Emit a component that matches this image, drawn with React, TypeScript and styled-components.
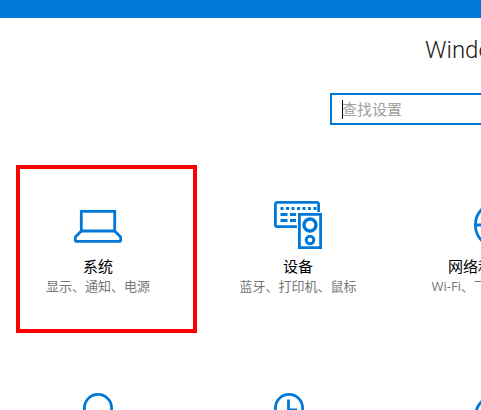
import { createGlobalStyle, styled } from 'styled-components'

const GlobalStyle = createGlobalStyle`
  html, body {
    margin: 0;
    padding: 0;
    background: #fff;
    overflow: hidden;
  }
`

const Page = styled.div`
  width: 481px;
  height: 410px;
  overflow: hidden;
  font-family: 'Noto Sans CJK SC', 'Noto Sans', sans-serif;
`

const TopBar = styled.div`
  height: 18px;
  background: #0078d7;
`

const Header = styled.header`
  display: flex;
  flex-direction: column;
  align-items: flex-start;
  padding: 17px 0 0 330px;
  height: 147px;
  box-sizing: border-box;
`

const Title = styled.h1`
  margin: 0 0 0 95px;
  height: 30px;
  font-family: Roboto, 'Noto Sans CJK SC', sans-serif;
  font-size: 24px;
  font-weight: 300;
  line-height: 30px;
  color: #222;
  white-space: nowrap;
`

const SearchBox = styled.div`
  margin-top: 28px;
  flex: none;
  width: 300px;
  height: 32px;
  box-sizing: border-box;
  border: 2px solid #0078d7;
  padding: 0 0 2px 10px;
  display: flex;
  align-items: center;
  position: relative;
  font-size: 15px;
  color: #a0a0a0;
`

const Caret = styled.span`
  position: absolute;
  left: 10px;
  top: 5px;
  width: 1px;
  height: 19px;
  background: #000;
`

const Grid = styled.div`
  display: grid;
  grid-template-columns: repeat(3, 200px);
  grid-auto-rows: 192px;
  margin-left: -2px;
`

const Tile = styled.div`
  position: relative;
  display: flex;
  flex-direction: column;
  align-items: center;
  padding-top: 36px;
  white-space: nowrap;
`

const IconSvg = styled.svg.attrs({ viewBox: '0 0 48 48', fill: 'none', stroke: 'currentColor' })`
  display: block;
  flex: none;
  width: 48px;
  height: 48px;
  color: #0078d7;
  stroke-width: 2.8px;
`

const TileName = styled.div`
  margin-top: 8px;
  font-family: Roboto, 'Noto Sans CJK SC', sans-serif;
  font-size: 15px;
  line-height: 20px;
  color: #000;
`

const TileDesc = styled.div`
  font-family: 'Open Sans', 'Noto Sans CJK SC', sans-serif;
  font-size: 13px;
  line-height: 18px;
  color: #767676;
`

const RedFrame = styled.div`
  position: absolute;
  left: 18px;
  top: 0;
  width: 181px;
  height: 168px;
  box-sizing: border-box;
  border: 4px solid #f00;
`

const LaptopIcon = () => (
  <IconSvg>
    <path d="M7.300 10.300h33.400V30H7.300z" />
    <path d="M7.300 30L1.800 35.500q-.5.500-.5 1.500v2q0 1.400 1.400 1.400h42.600q1.400 0 1.400-1.400v-2q0-1-.5-1.500L40.700 30" />
  </IconSvg>
)

const DevicesIcon = () => (
  <IconSvg>
    <path d="M23 25.600H3a1.600 1.600 0 0 1-1.600-1.600V3A1.600 1.600 0 0 1 3 1.400h40A1.600 1.600 0 0 1 44.600 3v8" />
    <path d="M25.400 13.400h21.200v33.200H25.400z" />
    <circle cx="36" cy="24" r="6" strokeWidth="3.400" />
    <circle cx="36" cy="39" r="3.800" strokeWidth="3" />
    <path d="M6.500 7.500h3M12 7.500h3M17.500 7.500h3M23 7.500h3M28.500 7.500h3M34 7.500h3M39.500 7.500h3M6.500 13.500h7M16 13.500h6M6.500 19.500h7M16 19.500h6" />
  </IconSvg>
)

const GlobeIcon = () => (
  <IconSvg>
    <circle cx="24" cy="24" r="22.600" />
    <ellipse cx="24" cy="24" rx="10" ry="22.600" />
    <path d="M1.400 24h45.200" />
  </IconSvg>
)

const PersonIcon = () => (
  <IconSvg>
    <circle cx="24" cy="15" r="13.600" />
  </IconSvg>
)

const ClockIcon = () => (
  <IconSvg>
    <circle cx="15" cy="15" r="13.600" />
    <path d="M14.500 6.500V17H23" />
  </IconSvg>
)

const tiles = [
  { name: '系统', desc: '显示、通知、电源', icon: <LaptopIcon />, framed: true },
  { name: '设备', desc: '蓝牙、打印机、鼠标', icon: <DevicesIcon /> },
  { name: '网络和 Internet', desc: 'Wi-Fi、飞行模式、VPN', icon: <GlobeIcon /> },
  { name: '账户', desc: '你的账户、电子邮件、同步设置', icon: <PersonIcon /> },
  { name: '时间和语言', desc: '语音、区域、日期', icon: <ClockIcon /> },
  { name: '轻松使用', desc: '讲述人、放大镜、高对比度', icon: <GlobeIcon /> },
]

export default function App() {
  return (
    <Page>
      <GlobalStyle />
      <TopBar />
      <Header>
        <Title>Windows 设置</Title>
        <SearchBox>
          <Caret />
          查找设置
        </SearchBox>
      </Header>
      <Grid>
        {tiles.map((tile) => (
          <Tile key={tile.name}>
            {tile.icon}
            <TileName>{tile.name}</TileName>
            <TileDesc>{tile.desc}</TileDesc>
            {tile.framed && <RedFrame />}
          </Tile>
        ))}
      </Grid>
    </Page>
  )
}
